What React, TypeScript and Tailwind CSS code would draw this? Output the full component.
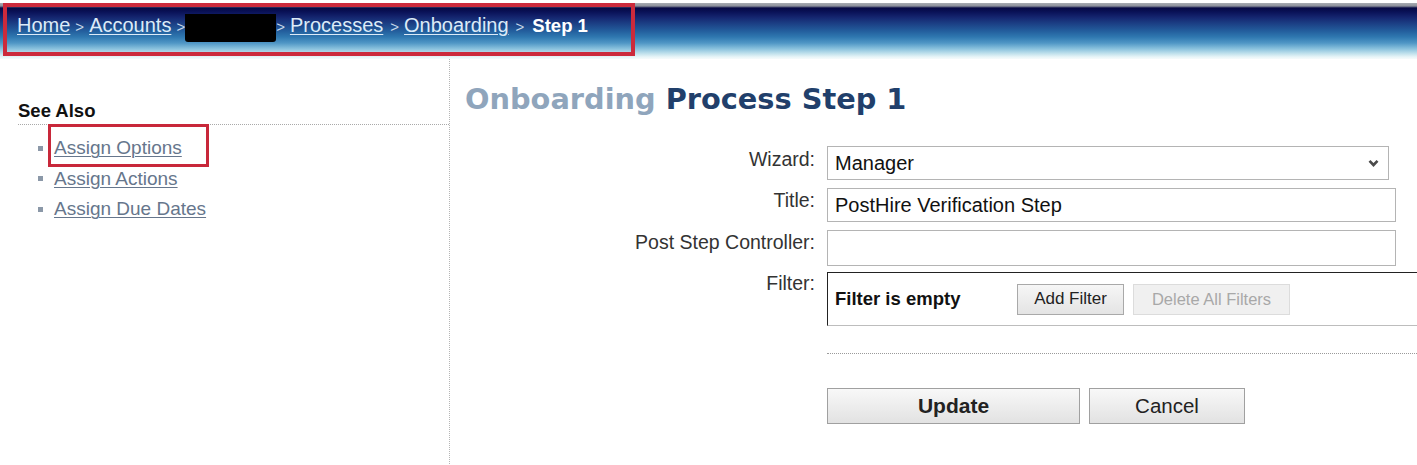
import React from "react";

const crumbLink = "text-[#dcebf8] underline decoration-1 underline-offset-2";
const sep = "text-[#c8d8ea] text-[15px] mx-[5px]";

function Header() {
  return (
    <div className="h-[56px] w-full bg-[linear-gradient(to_bottom,#a7abb2_0px,#8d919b_3px,#050844_5px,#0a1258_9px,#14246e_14px,#1b3d83_20px,#235e9d_28px,#2f78b0_34px,#4f96c5_40px,#8cc3de_46px,#c6e4ee_51px,#e8f5f8_54px,#f6fbfc_56px)]">
      <div className="ml-[3px] mt-[3px] w-[632px] h-[53px] border-4 border-[#cc2a3c] pl-[10px] pt-[5px] font-['Liberation_Sans',Arial,sans-serif] text-[20px] leading-[24px] whitespace-nowrap">
        <a href="#" className={crumbLink}>Home</a>
        <span className={sep}>&gt;</span>
        <a href="#" className={crumbLink}>Accounts</a>
        <span className={sep}>&gt;</span>
        <span className="inline-block align-middle w-[91px] h-[28px] bg-black rounded-b-[3px] -ml-[5px] mt-[2px]" />
        <span className="text-[#c8d8ea] text-[15px] ml-0 mr-[5px]">&gt;</span>
        <a href="#" className={crumbLink}>Processes</a>
        <span className={sep + " !ml-[7px]"}>&gt;</span>
        <a href="#" className={crumbLink}>Onboarding</a>
        <span className={sep + " !ml-[7px]"}>&gt;</span>
        <span className="font-bold text-white text-[18.5px] ml-[3px]">Step 1</span>
      </div>
    </div>
  );
}

function Sidebar() {
  const items = ["Assign Options", "Assign Actions", "Assign Due Dates"];
  return (
    <div className="w-[450px] shrink-0 border-r border-dotted border-[#b5b5b5] pl-[18px] pt-[40px] min-h-[409px]">
      <div className="border-b border-dotted border-[#a9a9a9] pb-[1px] font-bold text-[18.5px] leading-[24px] text-[#111]">
        See Also
      </div>
      <ul className="mt-[8px] pl-[20px]">
        {items.map((t, i) => (
          <li key={t} className="relative flex items-center h-[30.5px]">
            <span className="w-[5px] h-[5px] bg-[#8b98a8] mr-[11px] shrink-0" />
            <a href="#" className="text-[19px] leading-[24px] text-[#66768c] underline decoration-1 underline-offset-2">
              {t}
            </a>
            {i === 0 && (
              <span className="absolute left-[10px] top-[-9px] w-[161px] h-[43px] border-[3px] border-[#c8283a] pointer-events-none" />
            )}
          </li>
        ))}
      </ul>
    </div>
  );
}

function Label({ children, pt }: { children: React.ReactNode; pt: string }) {
  return <div className={"text-right text-[19.5px] leading-[24px] text-[#333] " + pt}>{children}</div>;
}

function Main() {
  return (
    <div className="flex-1 min-w-0 pt-[20px]">
      <h1 className="pl-[15px] font-['DejaVu_Sans',Verdana,sans-serif] font-bold text-[28.8px] leading-[40px] whitespace-nowrap">
        <span className="text-[#8fa5bc]">Onboarding</span>{" "}
        <span className="text-[#213f6b]">Process Step 1</span>
      </h1>
      <div className="mt-[27px] grid grid-cols-[365px_1fr] gap-x-[12px]">
        <Label pt="pt-[1px]">Wizard:</Label>
        <div className="w-[562px] h-[34px] border border-[#b4b4b4] flex items-center justify-between pl-[7px] pr-[9px] text-[20px] text-[#111]">
          <span>Manager</span>
          <svg width="11" height="8" viewBox="0 0 11 8">
            <path d="M1.5 1.8 L5.5 6 L9.5 1.8" fill="none" stroke="#4a4a4a" strokeWidth="2.6" />
          </svg>
        </div>

        <Label pt="mt-[8px]">Title:</Label>
        <div className="mt-[8px] w-[569px] h-[34px] border border-[#b4b4b4] flex items-center pl-[7px] text-[20px] text-[#111]">
          PostHire Verification Step
        </div>

        <Label pt="mt-[8px]">Post Step Controller:</Label>
        <div className="mt-[8px] w-[569px] h-[36px] border border-[#b4b4b4]" />

        <Label pt="mt-[5px]">Filter:</Label>
        <div className="mt-[6px] w-[620px] h-[54px] border border-[#222] border-r-[#bbb] border-b-[#bdbdbd] flex items-center pl-[7px]">
          <span className="font-bold text-[18.5px] text-[#111] w-[182px]">Filter is empty</span>
          <button className="w-[107px] h-[31px] border border-[#a9a9a9] bg-[linear-gradient(to_bottom,#f6f6f6,#e4e4e4)] text-[17px] text-[#222]">
            Add Filter
          </button>
          <button className="ml-[9px] w-[157px] h-[31px] border border-[#dcdcdc] bg-[#f0f0f0] text-[16.5px] text-[#a8a8a8]">
            Delete All Filters
          </button>
        </div>

        <div />
        <div className="mt-[27px] border-t border-dotted border-[#9a9a9a] w-[620px]" />

        <div />
        <div className="mt-[34px] flex gap-[9px]">
          <button className="w-[253px] h-[36px] border border-[#a0a0a0] bg-[linear-gradient(to_bottom,#f8f8f8,#e2e2e2)] font-bold text-[21px] text-[#222]">
            Update
          </button>
          <button className="w-[156px] h-[36px] border border-[#a0a0a0] bg-[linear-gradient(to_bottom,#f8f8f8,#e2e2e2)] text-[20.5px] text-[#222]">
            Cancel
          </button>
        </div>
      </div>
    </div>
  );
}

export default function App() {
  return (
    <div className="w-[1417px] h-[465px] overflow-hidden bg-white font-['Liberation_Sans',Arial,sans-serif]">
      <Header />
      <div className="flex">
        <Sidebar />
        <Main />
      </div>
    </div>
  );
}
